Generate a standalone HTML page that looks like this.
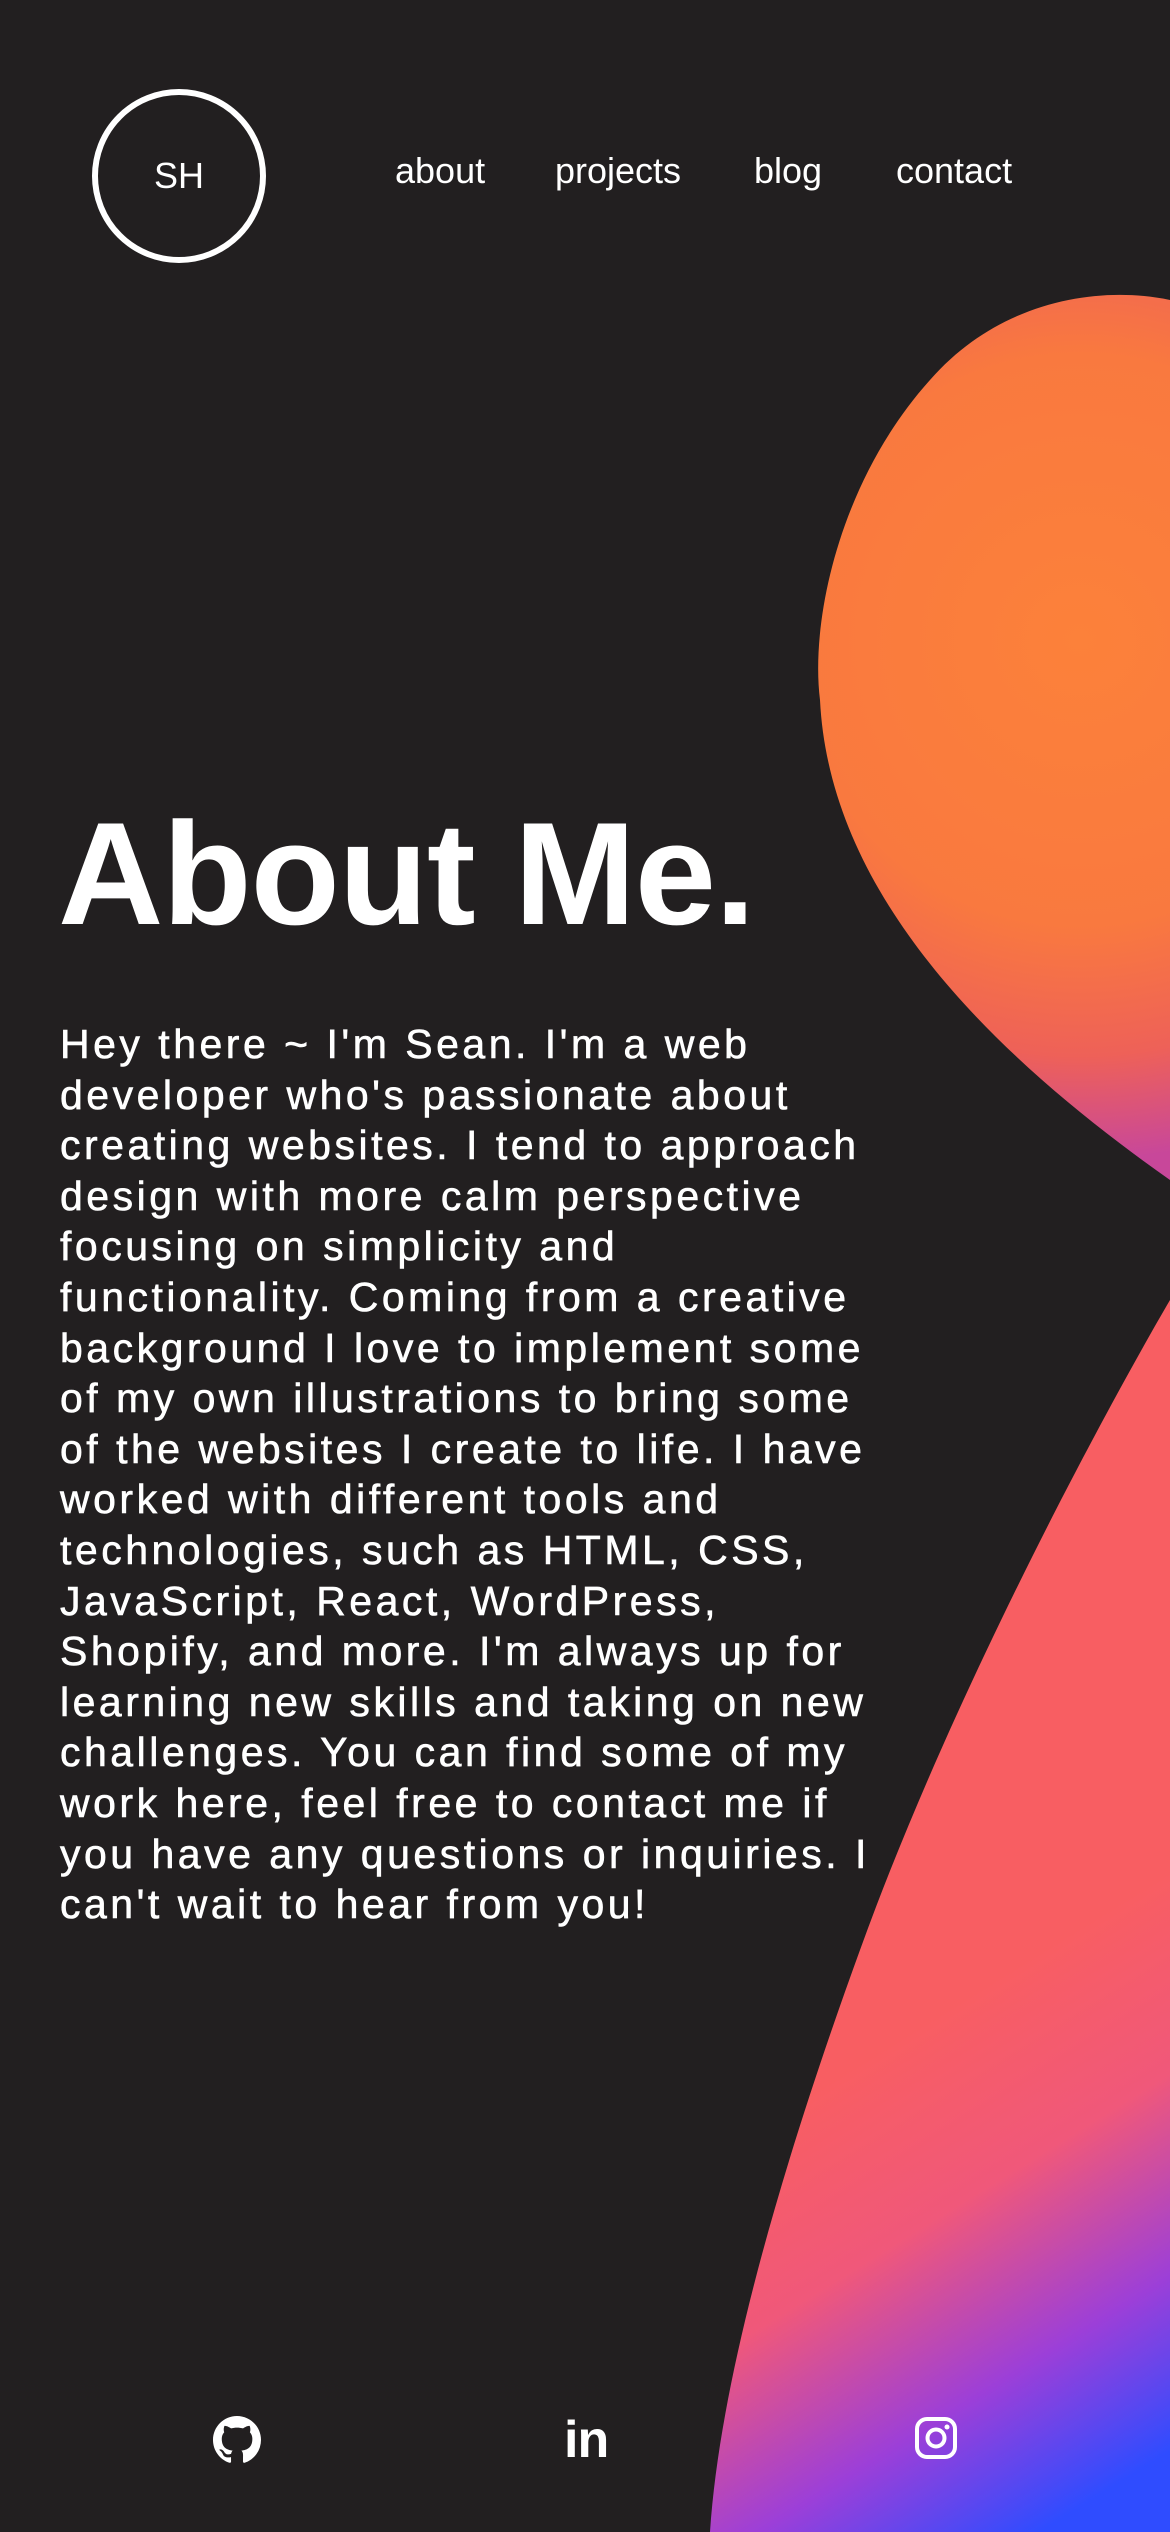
<!DOCTYPE html>
<html><head><meta charset="utf-8"><style>
html,body{margin:0;padding:0;}
body{width:1170px;height:2532px;background:#221f20;position:relative;overflow:hidden;font-family:"Liberation Sans",sans-serif;color:#fff;}
svg.bg{position:absolute;left:0;top:0;}
.logo{position:absolute;left:92px;top:89px;width:162px;height:162px;border:6px solid #fff;border-radius:50%;display:flex;align-items:center;justify-content:center;font-size:36px;}
.nav{position:absolute;top:150px;font-size:36px;}
h1{position:absolute;left:58px;top:790px;margin:0;font-size:146px;font-weight:bold;letter-spacing:-1px;}
.p{position:absolute;left:60px;top:1019px;font-size:41px;line-height:50.6px;letter-spacing:3.5px;white-space:nowrap;-webkit-text-stroke:0.6px #fff;}
.ic{position:absolute;top:2416px;}
</style></head><body>
<svg class="bg" width="1170" height="2532">
<defs>
<radialGradient id="g1" cx="1080" cy="640" r="520" gradientUnits="userSpaceOnUse">
<stop offset="0" stop-color="#fc813a"/><stop offset="0.55" stop-color="#f9793f"/><stop offset="0.8" stop-color="#ee6158"/><stop offset="1" stop-color="#c8479a"/></radialGradient>
<linearGradient id="g2" x1="960" y1="2000" x2="1220" y2="2420" gradientUnits="userSpaceOnUse">
<stop offset="0" stop-color="#f85e62"/><stop offset="0.35" stop-color="#f0587a"/><stop offset="0.7" stop-color="#9c3fd8"/><stop offset="1" stop-color="#2f4cff"/></linearGradient>
</defs>
<path d="M1170,300 C1100,285 1000,300 930,380 C840,480 810,620 820,700 C830,900 1000,1060 1170,1180 Z" fill="url(#g1)"/>
<path d="M1170,1300 C1100,1420 950,1700 860,1950 C780,2170 720,2380 710,2532 L1170,2532 Z" fill="url(#g2)"/>
</svg>
<div class="logo">SH</div>
<div class="nav" style="left:395px">about</div>
<div class="nav" style="left:555px">projects</div>
<div class="nav" style="left:754px">blog</div>
<div class="nav" style="left:896px">contact</div>
<h1>About Me.</h1>
<div class="p">Hey there ~ I'm Sean. I'm a web<br>developer who's passionate about<br>creating websites. I tend to approach<br>design with more calm perspective<br>focusing on simplicity and<br>functionality. Coming from a creative<br>background I love to implement some<br>of my own illustrations to bring some<br>of the websites I create to life. I have<br>worked with different tools and<br>technologies, such as HTML, CSS,<br>JavaScript, React, WordPress,<br>Shopify, and more. I'm always up for<br>learning new skills and taking on new<br>challenges. You can find some of my<br>work here, feel free to contact me if<br>you have any questions or inquiries. I<br>can't wait to hear from you!</div>
<svg class="ic" style="left:213px" width="48" height="48" viewBox="0 0 16 16"><path fill="#fff" d="M8 0C3.58 0 0 3.58 0 8c0 3.54 2.29 6.53 5.47 7.59.4.07.55-.17.55-.38 0-.19-.01-.82-.01-1.49-2.01.37-2.53-.49-2.69-.94-.09-.23-.48-.94-.82-1.13-.28-.15-.68-.52-.01-.53.63-.01 1.08.58 1.23.82.72 1.21 1.87.87 2.33.66.07-.52.28-.87.51-1.07-1.78-.2-3.64-.89-3.64-3.95 0-.87.31-1.59.82-2.15-.08-.2-.36-1.02.08-2.12 0 0 .67-.21 2.2.82.64-.18 1.32-.27 2-.27.68 0 1.36.09 2 .27 1.53-1.04 2.2-.82 2.2-.82.44 1.1.16 1.92.08 2.12.51.56.82 1.27.82 2.15 0 3.07-1.87 3.75-3.65 3.95.29.25.54.73.54 1.48 0 1.07-.01 1.93-.01 2.2 0 .21.15.46.55.38A8.013 8.013 0 0016 8c0-4.42-3.58-8-8-8z"/></svg>
<div class="ic" style="left:564px;top:2414px;font-size:52px;font-weight:bold;letter-spacing:-1px;line-height:52px">in</div>
<svg class="ic" style="left:914px" width="44" height="44" viewBox="0 0 44 44"><rect x="3" y="3" width="38" height="38" rx="10" fill="none" stroke="#fff" stroke-width="4"/><circle cx="22" cy="22" r="8.5" fill="none" stroke="#fff" stroke-width="4"/><circle cx="33" cy="11" r="2.5" fill="#fff"/></svg>
</body></html>
